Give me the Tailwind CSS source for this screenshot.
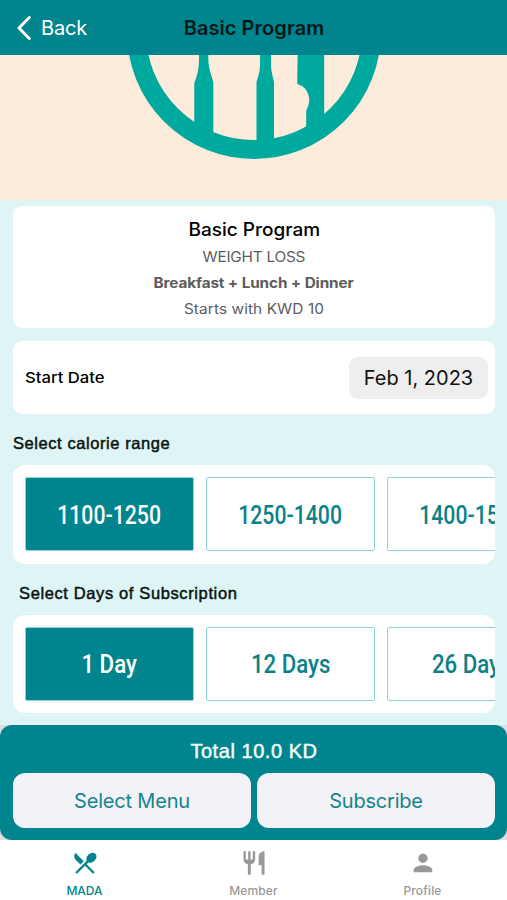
<!DOCTYPE html>
<html lang="en">
<head>
<meta charset="utf-8">
<title>Basic Program</title>
<script src="https://cdn.jsdelivr.net/npm/@tailwindcss/browser@4"></script>
</head>
<body class="w-[507px] h-[900px] overflow-hidden flex flex-col bg-[#dff4f5] font-['Inter',sans-serif] whitespace-nowrap">
  <header class="h-[55px] shrink-0 bg-[#00848d] grid grid-cols-[1fr_auto_1fr] items-center">
    <div class="flex items-center pl-[17px] gap-[10px] text-white text-[20px]">
      <svg class="w-[14px] h-[24px]" viewBox="0 0 14 24" fill="none" stroke="currentColor" stroke-width="2.900" stroke-linecap="round" stroke-linejoin="round"><path d="M12.300 1.600 2 12l10.300 10.400"/></svg>
      <span class="tracking-[-0.200px]">Back</span>
    </div>
    <h1 class="text-[20px] font-semibold text-[#06181a] tracking-[0.050px] pl-[1px]">Basic Program</h1>
    <div></div>
  </header>
  <section class="h-[145px] shrink-0 bg-[#fdebdc]">
    <svg class="w-[507px] h-[145px]" viewBox="0 55 507 145" fill="#00a99d">
      <circle cx="254" cy="32" r="117.500" fill="none" stroke="#00a99d" stroke-width="19"/>
      <path d="M199 50v8c0 12-2 18-4.700 25v50h19V82c-2.500-9-5-14-5-24v-8z"/>
      <path d="M260 50v14c0 8-2 13-3.500 18v65h17.500V82c-2-8-3-12-3-18V50z"/>
      <path d="M297.700 50 297.200 83.300c0 .8 1 1 2 1.400 6 2 10 8.300 10 15.300 0 6-3 8-3 13v25l18-10V50z"/>
    </svg>
  </section>
  <main class="h-[525px] shrink-0 flex flex-col pl-[13px] pr-[12px] pt-[6px]">
    <section class="h-[122px] rounded-[9px] bg-white flex flex-col items-center pt-[11px] text-[#5c5c5c]">
      <h2 class="text-[18px] leading-[26px] font-medium text-black scale-x-[1.056]">Basic Program</h2>
      <p class="text-[14px] leading-[28px] tracking-[-0.200px] scale-x-[1.095]">WEIGHT LOSS</p>
      <p class="text-[14px] leading-[24px] font-bold tracking-[-0.100px] scale-x-[1.093]">Breakfast + Lunch + Dinner</p>
      <p class="text-[14px] leading-[27px] tracking-[0.100px] scale-x-[1.095]">Starts with KWD 10</p>
    </section>
    <section class="mt-[13px] h-[73px] rounded-[9px] bg-white flex items-center justify-between pl-[12px] pr-[7px]">
      <span class="pt-[1px] text-[15px] font-medium text-black origin-left scale-x-[1.110]">Start Date</span>
      <span class="w-[139px] h-[42px] rounded-[9px] bg-[#eee] text-[20px] text-[#111] flex items-center justify-center">Feb 1, 2023</span>
    </section>
    <h3 class="h-[51px] pt-[19px] text-[16.500px] leading-[20px] tracking-[0.570px] font-['Liberation_Sans',Arial,sans-serif] text-[#0a1414] [-webkit-text-stroke:0.5px_#0a1414]">Select calorie range</h3>
    <div class="h-[99px] shrink-0 rounded-[12px] bg-white overflow-hidden flex gap-[12px] p-[12px] text-[25px] font-medium font-['Roboto',sans-serif] text-[#0b8188]">
      <div class="w-[169px] h-[74px] shrink-0 rounded-[2px] border border-[#8ed6d3] bg-[#00848d] text-white flex items-center justify-center pt-[3px]"><span class="scale-x-[0.850]">1100-1250</span></div>
      <div class="w-[169px] h-[74px] shrink-0 rounded-[2px] border border-[#8ed6d3] flex items-center justify-center pt-[3px]"><span class="scale-x-[0.850]">1250-1400</span></div>
      <div class="w-[169px] h-[74px] shrink-0 rounded-[2px] border border-[#8ed6d3] flex items-center justify-center pt-[3px]"><span class="scale-x-[0.850]">1400-1550</span></div>
    </div>
    <h3 class="h-[51px] pt-[19px] pl-[6px] text-[16.500px] leading-[20px] tracking-[0.620px] font-['Liberation_Sans',Arial,sans-serif] text-[#0a1414] [-webkit-text-stroke:0.5px_#0a1414]">Select Days of Subscription</h3>
    <div class="h-[98px] shrink-0 rounded-[12px] bg-white overflow-hidden flex gap-[12px] p-[12px] text-[25px] font-medium font-['Roboto',sans-serif] text-[#0b8188]">
      <div class="w-[169px] h-[74px] shrink-0 rounded-[2px] border border-[#8ed6d3] bg-[#00848d] text-white flex items-center justify-center pt-[1px]"><span class="scale-x-[0.890]">1 Day</span></div>
      <div class="w-[169px] h-[74px] shrink-0 rounded-[2px] border border-[#8ed6d3] flex items-center justify-center pt-[1px]"><span class="scale-x-[0.890]">12 Days</span></div>
      <div class="w-[169px] h-[74px] shrink-0 rounded-[2px] border border-[#8ed6d3] flex items-center justify-center pt-[1px]"><span class="scale-x-[0.890]">26 Days</span></div>
    </div>
  </main>
  <div class="h-[115px] shrink-0 bg-[#d9e0e1]">
    <section class="h-full rounded-[12px] bg-[#00848d] pl-[13px] pr-[12px] pt-[12px]">
      <p class="h-[36px] text-center text-[20px] leading-[29px] tracking-[0.550px] text-[#effcfc] font-['Liberation_Sans',Arial,sans-serif] [-webkit-text-stroke:0.5px_#effcfc]">Total 10.0 KD</p>
      <div class="flex gap-[6px] text-[20px] tracking-[-0.200px] text-[#14858c]">
        <button class="w-[238px] h-[55px] rounded-[12px] bg-[#f2f2f7]">Select Menu</button>
        <button class="w-[238px] h-[55px] rounded-[12px] bg-[#f2f2f7]">Subscribe</button>
      </div>
    </section>
  </div>
  <nav class="h-[60px] shrink-0 bg-white grid grid-cols-3 text-[12px] font-medium text-[#999]">
    <div class="flex flex-col items-center pt-[9px] text-[#00848d]">
      <svg class="w-[28px] h-[28px]" viewBox="0 0 24 24" fill="currentColor"><path d="M8.100 13.340l2.830-2.830L3.910 3.500c-1.560 1.560-1.560 4.090 0 5.660l4.190 4.180zm6.780-1.810c1.530.71 3.680.21 5.270-1.380 1.910-1.910 2.280-4.650.81-6.120-1.460-1.460-4.200-1.100-6.120.81-1.590 1.590-2.090 3.740-1.380 5.270L3.700 19.870l1.410 1.410L12 14.410l6.880 6.880 1.410-1.410L13.410 13l1.470-1.470z"/></svg>
      <span class="mt-[5px]">MADA</span>
    </div>
    <div class="flex flex-col items-center pt-[9px]">
      <svg class="w-[28px] h-[28px]" viewBox="0 0 24 24" fill="currentColor"><path d="M11 9H9V2H7v7H5V2H3v7c0 2.120 1.660 3.840 3.750 3.970V22h2.500v-9.030C11.340 12.840 13 11.120 13 9V2h-2v7zm5-3v8h2.500v8H21V2c-2.760 0-5 2.240-5 4z"/></svg>
      <span class="mt-[5px] tracking-[0.150px]">Member</span>
    </div>
    <div class="flex flex-col items-center pt-[9px]">
      <svg class="w-[28px] h-[28px]" viewBox="0 0 24 24" fill="currentColor"><path d="M12 12c2.210 0 4-1.790 4-4s-1.790-4-4-4-4 1.790-4 4 1.790 4 4 4zm0 2c-2.670 0-8 1.340-8 4v2h16v-2c0-2.660-5.330-4-8-4z"/></svg>
      <span class="mt-[5px] tracking-[0.150px]">Profile</span>
    </div>
  </nav>
</body>
</html>
